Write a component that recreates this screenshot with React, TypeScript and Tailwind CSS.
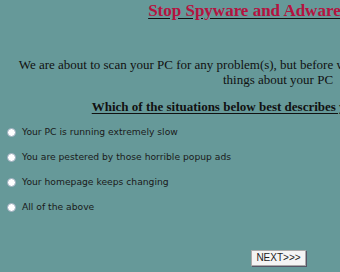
const options = [
	"Your PC is running extremely slow",
	"You are pestered by those horrible popup ads",
	"Your homepage keeps changing",
	"All of the above",
];

const App = () => {
	return (
		<div className="h-[272px] w-[340px] overflow-hidden bg-[#669999] text-[#111]">
			<div className="w-[556px]">
				<h1 className="pt-[1px] text-center font-['Liberation_Serif',serif] text-[17px] leading-[20px] font-bold">
					<span className="underline decoration-[#111] underline-offset-[2px]">
						<span className="text-[#b5123f]">
							Stop Spyware and Adware Forever!
						</span>
					</span>
				</h1>
				<p className="mt-[36px] text-center font-['Liberation_Serif',serif] text-[13px] leading-[15px]">
					We are about to scan your PC for any problem(s), but before we do
					that, we'd need to ask you a few
					<br />
					things about your PC
				</p>
				<h2 className="mt-[12px] text-center font-['Liberation_Serif',serif] text-[13px] leading-[16px] font-bold underline underline-offset-[2px]">
					Which of the situations below best describes your PC's problem(s)?
				</h2>
			</div>
			<div className="mt-[9px] flex flex-col gap-[9px] pl-[7px]">
				{options.map((o) => (
					<label
						key={o}
						className="flex h-[16px] items-center gap-[6px] font-['DejaVu_Sans',sans-serif] text-[9.2px] text-[#1a1a1a]"
					>
						<span className="h-[9px] w-[9px] rounded-full border border-[#9ab] bg-white" />
						{o}
					</label>
				))}
			</div>
			<div className="mt-[35px] flex pl-[251px]">
				<button className="h-[16px] w-[55px] border border-[#aaa] bg-[#f4f4f4] font-['Liberation_Sans',sans-serif] text-[10px] leading-[14px] text-[#222] shadow-[1px_1px_0_#556]">
					NEXT&gt;&gt;&gt;
				</button>
			</div>
		</div>
	);
};

export default App;
